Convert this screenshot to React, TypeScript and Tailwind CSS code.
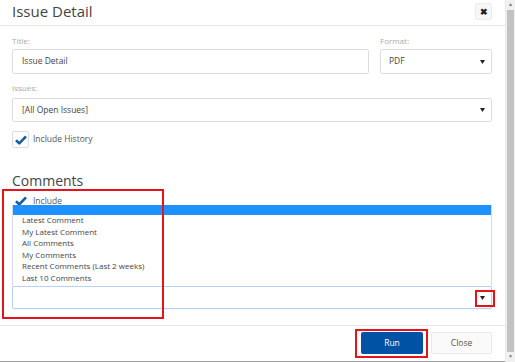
import React from "react";

function Check() {
  return (
    <svg width="12" height="10" viewBox="0 0 12 10">
      <path d="M1 5.2 L4.3 8.4 L11 1.4" fill="none" stroke="#1a5aa6" strokeWidth="2.6" strokeLinejoin="round" />
    </svg>
  );
}

function Caret() {
  return (
    <svg width="5" height="4" viewBox="0 0 5 4">
      <path d="M0 0 H5 L2.5 4 Z" fill="#222" />
    </svg>
  );
}

const options = [
  "Latest Comment",
  "My Latest Comment",
  "All Comments",
  "My Comments",
  "Recent Comments (Last 2 weeks)",
  "Last 10 Comments",
];

export default function App() {
  return (
    <div
      className="relative flex w-[515px] h-[362px] overflow-hidden bg-white text-[#555]"
      style={{ fontFamily: '"Open Sans", "Liberation Sans", sans-serif' }}
    >
      <div className="flex flex-col w-[505px] h-[362px] border-b border-[#a0a0a0]">
        <header className="flex items-center justify-between h-[26px] border-b border-[#e6e6e6] pl-3 pr-[13px]">
          <h1 className="text-[15px] leading-[20px] text-[#444] -mt-[4px]">Issue Detail</h1>
          <button className="flex items-center justify-center w-[17px] h-[17px] -mt-[3px] rounded-[2px] border border-[#ececec] bg-[#f7f7f7] text-[9px] font-bold text-[#222] leading-none">
            ✖
          </button>
        </header>

        <main className="pl-3 pr-[13px]">
          <div className="flex gap-[11px] mt-[9px]">
            <div className="flex-1">
              <label className="block text-[8px] leading-[12px] text-[#aaa]">Title:</label>
              <div className="mt-[2px] h-[25px] flex items-center px-[9px] border border-[#ddd] rounded-[2px] text-[8.5px] text-[#444]">
                Issue Detail
              </div>
            </div>
            <div className="w-[112px]">
              <label className="block text-[8px] leading-[12px] text-[#aaa]">Format:</label>
              <div className="mt-[2px] h-[25px] flex items-center justify-between pl-[8px] pr-[6px] border border-[#ddd] rounded-[2px] text-[8.5px] text-[#444]">
                PDF
                <Caret />
              </div>
            </div>
          </div>

          <label className="block mt-[8px] text-[8px] leading-[12px] text-[#aaa]">Issues:</label>
          <div className="mt-[4px] h-[24px] flex items-center justify-between pl-[9px] pr-[6px] border border-[#ddd] rounded-[2px] text-[8.5px] text-[#444]">
            [All Open Issues]
            <Caret />
          </div>

          <div className="flex items-center gap-[4px] mt-[9px] h-[17px]">
            <div className="flex items-center justify-center w-[17px] h-[17px] border border-[#ddd] rounded-[2px] bg-white">
              <Check />
            </div>
            <span className="text-[8.5px] text-[#555]">Include History</span>
          </div>

          <h2 className="mt-[24px] text-[14px] leading-[18px] text-[#444]">Comments</h2>

          <div className="flex items-center gap-[4px] mt-[3px] h-[16px]">
            <div className="flex items-center justify-center w-[17px] h-[16px] rounded-[2px]">
              <Check />
            </div>
            <span className="text-[8.5px] text-[#555]">Include</span>
          </div>

          <div className="relative mt-[77px]">
            <div className="absolute bottom-full left-0 right-0 h-[81px] bg-white border-x border-[#cfdcf0] flex flex-col">
              <div className="h-[10px] bg-[#1e90ff]" />
              <ul className="-mt-[1px] pl-[9px]">
                {options.map((o) => (
                  <li key={o} className="text-[8px] leading-[11.6px] text-[#444]">
                    {o}
                  </li>
                ))}
              </ul>
            </div>
            <div className="h-[23px] flex items-center justify-end pr-[6px] border border-[#b9d0ee] rounded-[2px] shadow-[0_0_2px_#d6e6fb]">
              <Caret />
            </div>
          </div>
        </main>

        <footer className="mt-[16px] border-t border-[#e6e6e6] flex justify-end gap-[8px] pt-[6px] pr-[13px]">
          <button className="w-[62px] h-[22px] rounded-[2px] bg-[#0052a4] text-white text-[8.5px]">Run</button>
          <button className="w-[61px] h-[22px] rounded-[2px] border border-[#e8e8e8] bg-[#fafafa] text-[8.5px] text-[#555]">
            Close
          </button>
        </footer>
      </div>

      <div className="flex flex-col w-[10px] h-[362px] border-l border-[#e8e8e8] bg-[#f1f1f1]">
        <div className="h-[10px] flex items-center justify-center text-[5px] text-[#777]">▲</div>
        <div className="flex-1 mx-[1px] bg-[#c2c2c2]" />
        <div className="h-[10px] flex items-center justify-center text-[5px] text-[#777]">▼</div>
      </div>

      <div className="absolute left-[2px] top-[189px] w-[162px] h-[130px] border-2 border-[#e3141b]" />
      <div className="absolute left-[475px] top-[290px] w-[20px] h-[17px] border-2 border-[#e3141b]" />
      <div className="absolute left-[355px] top-[329px] w-[73px] h-[29px] border-2 border-[#e3141b]" />
    </div>
  );
}
